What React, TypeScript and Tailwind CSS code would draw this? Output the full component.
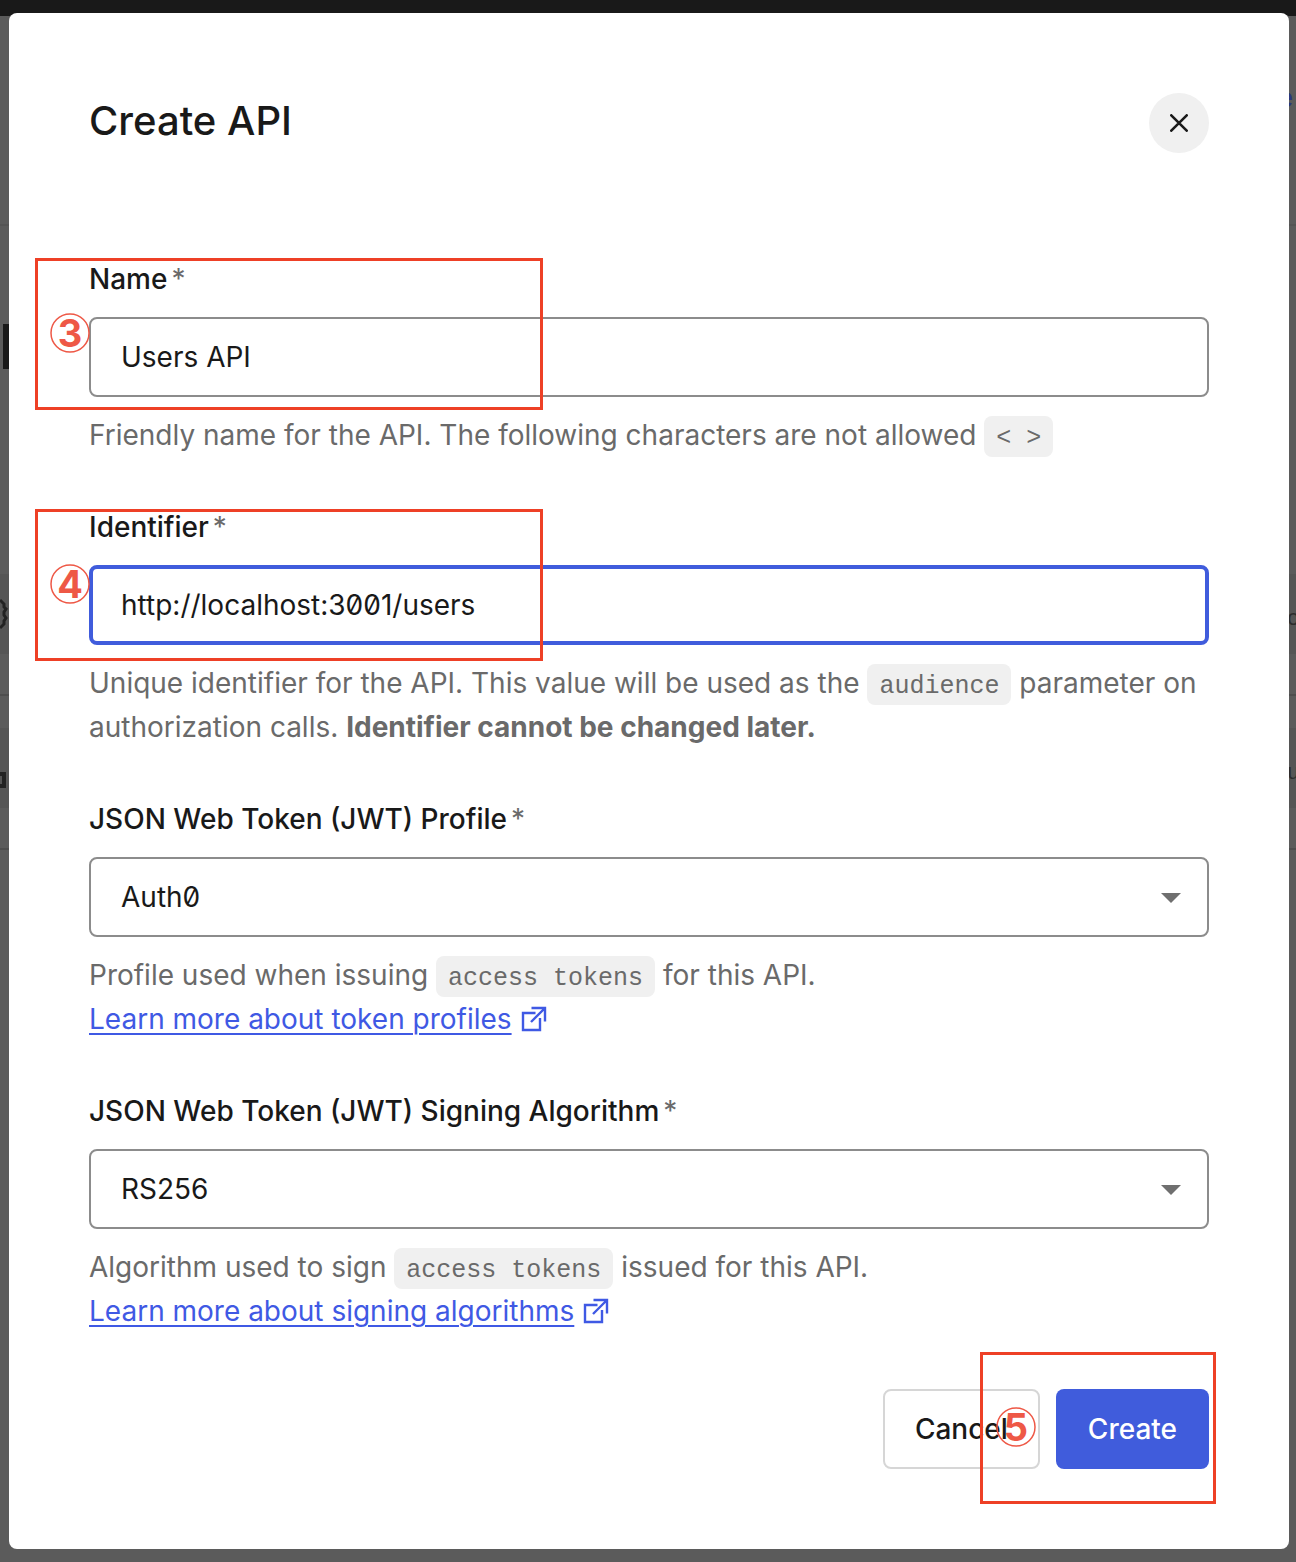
import { useState } from "react";
import type { ReactNode } from "react";

function Code({ children }: { children: ReactNode }) {
  return (
    <code className="whitespace-pre rounded-lg bg-[#f0f0f0] px-3 pt-2 pb-1 font-['Liberation_Mono',monospace] text-[25px] leading-none">
      {children}
    </code>
  );
}

function Marker({ n, className }: { n: number; className: string }) {
  return (
    <span
      className={`pointer-events-none absolute grid size-10 place-items-center text-[38px] leading-none font-bold text-[#ee5846] ${className}`}
    >
      <svg aria-hidden="true" viewBox="0 0 40 40" className="col-start-1 row-start-1 size-10 fill-none stroke-current">
        <circle cx="20" cy="20" r="19" strokeWidth="1.5" />
      </svg>
      <span className="col-start-1 row-start-1">{n}</span>
    </span>
  );
}

function Highlight({ className }: { className: string }) {
  return <span aria-hidden="true" className={`pointer-events-none absolute h-[152px] border-3 border-[#ee4026] ${className}`} />;
}

function Label({ htmlFor, children }: { htmlFor: string; children: ReactNode }) {
  return (
    <label htmlFor={htmlFor} className="mb-4 block font-medium">
      {children}
      <span className="ml-1 font-normal text-[#6a6a6a]">*</span>
    </label>
  );
}

function Select({ id, options }: { id: string; options: string[] }) {
  return (
    <div className="grid items-center">
      <select
        id={id}
        className="col-start-1 row-start-1 h-20 w-full appearance-none rounded-lg border-2 border-[#8c8c8c] bg-white px-[30px] slashed-zero outline-none"
      >
        {options.map((o) => (
          <option key={o}>{o}</option>
        ))}
      </select>
      <svg
        aria-hidden="true"
        viewBox="0 0 20 10"
        className="pointer-events-none col-start-1 row-start-1 mt-0.5 mr-7 h-2.5 w-5 justify-self-end fill-[#6f6f6f]"
      >
        <path d="M0 0h20L10 10z" />
      </svg>
    </div>
  );
}

function DocLink({ children }: { children: ReactNode }) {
  return (
    <a href="#docs" className="flex w-fit items-center gap-2.5 text-[#3f59e4]">
      <span className="underline decoration-2 underline-offset-4">{children}</span>
      <svg aria-hidden="true" viewBox="0 0 24 24" className="size-6 overflow-visible fill-none stroke-current stroke-[2.4]">
        <path d="M13.5 6H1v17h17V11M9.5 1H23v13.5M23 1L9 15" />
      </svg>
    </a>
  );
}

function Backdrop() {
  return (
    <div aria-hidden="true" className="absolute inset-0 overflow-hidden bg-[#5b5b5b]">
      <div className="h-4 bg-[#191919]" />
      <div className="flex h-[210px] justify-end border-b-2 border-[#545454] pt-[62px] pr-[3px] text-[26px] leading-10 font-medium text-[#29377f]">
        e
      </div>
      <div className="h-[348px] pt-[98px] pl-[3px]">
        <div className="h-[45px] w-4 bg-[#191919]" />
      </div>
      <div className="flex h-20 items-center justify-between bg-[#555555]">
        <svg viewBox="0 0 8 32" className="h-8 w-2 fill-none stroke-[#222222] stroke-3">
          <path d="M0 2l4 4v3l2 2-2 3v3l2 3-2 3v3l-4 4" />
        </svg>
        <span className="-mr-1 pt-3 font-['Liberation_Mono',monospace] text-[22px] text-[#2c2c2c]">o</span>
      </div>
      <div className="h-[42px] border-b-2 border-[#4e4e4e]" />
      <div className="mt-8 flex h-20 items-center justify-between bg-[#555555]">
        <div className="-ml-2.5 mt-6 size-4 border-4 border-[#222222]" />
        <span className="-mr-1 pt-3 font-['Liberation_Mono',monospace] text-[22px] text-[#2c2c2c]">u</span>
      </div>
      <div className="h-[42px] border-b-2 border-[#4e4e4e]" />
    </div>
  );
}

export default function App() {
  const [name, setName] = useState("Users API");
  const [identifier, setIdentifier] = useState("http://localhost:3001/users");

  return (
    <div className="relative min-h-screen py-[13px] pr-[7px] pl-[9px] font-[Inter,sans-serif] text-[28px] leading-[44px] text-[#191919]">
      <Backdrop />
      <div role="dialog" aria-labelledby="title" className="relative rounded-lg bg-white p-20">
        <header className="mb-[104px] flex items-start justify-between">
          <h1 id="title" className="text-[40px] leading-[56px] font-medium">
            Create API
          </h1>
          <button type="button" aria-label="Close" className="flex size-15 items-center justify-center rounded-full bg-[#f0f0f0]">
            <svg viewBox="0 0 18 18" className="size-[18px] fill-none stroke-[#191919] stroke-[2.6]">
              <path d="M1.3 1.3l15.4 15.4M16.7 1.3L1.3 16.7" strokeLinecap="round" />
            </svg>
          </button>
        </header>

        <form onSubmit={(e) => e.preventDefault()}>
          <div className="flex flex-col gap-12">
            <div className="relative">
              <Label htmlFor="name">Name</Label>
              <input
                id="name"
                type="text"
                value={name}
                onChange={(e) => setName(e.target.value)}
                className="block h-20 w-full rounded-lg border-2 border-[#8c8c8c] bg-white px-[30px] slashed-zero outline-none"
              />
              <p className="mt-4 text-[#6a6a6a]">
                Friendly name for the API. The following characters are not allowed <Code>{"< >"}</Code>
              </p>
              <Highlight className="top-px -left-[54px] w-[508px]" />
              <Marker n={3} className="top-14 -left-[39px]" />
            </div>

            <div className="relative">
              <Label htmlFor="identifier">Identifier</Label>
              <input
                id="identifier"
                type="text"
                value={identifier}
                onChange={(e) => setIdentifier(e.target.value)}
                className="block h-20 w-full rounded-lg border-4 border-[#405cdc] bg-white px-7 slashed-zero outline-none"
              />
              <p className="mt-4 text-[#6a6a6a]">
                Unique identifier for the API. This value will be used as the <Code>audience</Code> parameter on authorization calls.{" "}
                <strong className="font-bold">Identifier cannot be changed later.</strong>
              </p>
              <Highlight className="top-1 -left-[54px] w-[508px]" />
              <Marker n={4} className="top-[59px] -left-[39px]" />
            </div>

            <div>
              <Label htmlFor="profile">JSON Web Token (JWT) Profile</Label>
              <Select id="profile" options={["Auth0", "RFC 9068"]} />
              <p className="mt-4 text-[#6a6a6a]">
                Profile used when issuing <Code>access tokens</Code> for this API.
              </p>
              <DocLink>Learn more about token profiles</DocLink>
            </div>

            <div>
              <Label htmlFor="algorithm">JSON Web Token (JWT) Signing Algorithm</Label>
              <Select id="algorithm" options={["RS256", "HS256"]} />
              <p className="mt-4 text-[#6a6a6a]">
                Algorithm used to sign <Code>access tokens</Code> issued for this API.
              </p>
              <DocLink>Learn more about signing algorithms</DocLink>
            </div>
          </div>

          <div className="relative mt-14 flex justify-end gap-4">
            <button type="button" className="h-20 rounded-lg border-2 border-[#d6d6d6] px-[30px] font-medium">
              Cancel
            </button>
            <button type="submit" className="h-20 rounded-lg bg-[#405cdc] px-8 font-medium text-white">
              Create
            </button>
            <Highlight className="-top-[37px] -right-[7px] w-[236px]" />
            <Marker n={5} className="top-[18px] right-[173px]" />
          </div>
        </form>
      </div>
    </div>
  );
}
